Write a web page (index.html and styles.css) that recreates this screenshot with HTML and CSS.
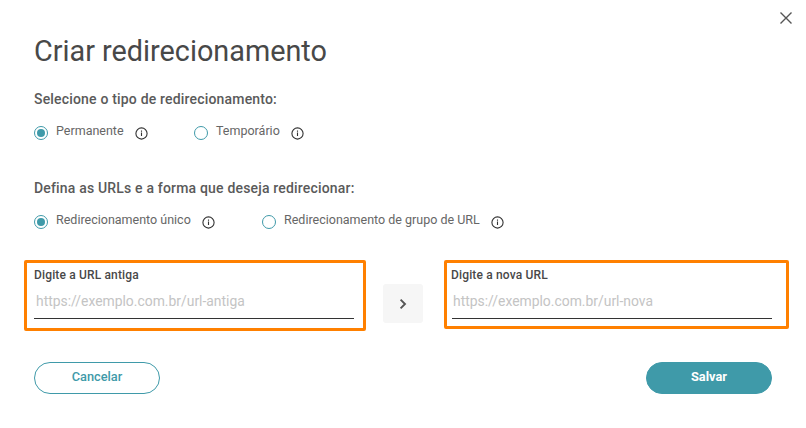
FILE: index.html
```html
<!DOCTYPE html>
<html lang="pt-BR">
<head>
<meta charset="utf-8">
<title>Criar redirecionamento</title>
<link rel="stylesheet" href="styles.css">
</head>
<body>
<main class="modal">
  <button class="close" aria-label="Fechar">
    <svg width="14" height="14" viewBox="0 0 14 14"><path d="M1.5 1.5l11 11M12.5 1.5l-11 11" fill="none" stroke="#555" stroke-width="1.4"/></svg>
  </button>
  <h1 class="title">Criar redirecionamento</h1>

  <h2 class="section section-first">Selecione o tipo de redirecionamento:</h2>
  <div class="options options-type">
    <label class="option"><span class="radio radio-on"></span><span class="option-text">Permanente</span>
      <svg class="info" viewBox="0 0 13 13"><circle cx="6.5" cy="6.5" r="5.6"/><path d="M6.5 5.6v3.4M6.5 3.5v1.2"/></svg></label>
    <label class="option"><span class="radio"></span><span class="option-text">Temporário</span>
      <svg class="info" viewBox="0 0 13 13"><circle cx="6.5" cy="6.5" r="5.6"/><path d="M6.5 5.6v3.4M6.5 3.5v1.2"/></svg></label>
  </div>

  <h2 class="section section-second">Defina as URLs e a forma que deseja redirecionar:</h2>
  <div class="options options-mode">
    <label class="option"><span class="radio radio-on"></span><span class="option-text">Redirecionamento único</span>
      <svg class="info" viewBox="0 0 13 13"><circle cx="6.5" cy="6.5" r="5.6"/><path d="M6.5 5.6v3.4M6.5 3.5v1.2"/></svg></label>
    <label class="option"><span class="radio"></span><span class="option-text">Redirecionamento de grupo de URL</span>
      <svg class="info" viewBox="0 0 13 13"><circle cx="6.5" cy="6.5" r="5.6"/><path d="M6.5 5.6v3.4M6.5 3.5v1.2"/></svg></label>
  </div>

  <div class="urls">
    <div class="field field-old">
      <div class="field-label">Digite a URL antiga</div>
      <div class="field-input">https://exemplo.com.br/url-antiga</div>
    </div>
    <div class="arrow">
      <svg width="10" height="12" viewBox="0 0 10 12"><path d="M2.6 1.6L7 6l-4.4 4.4" fill="none" stroke="#555" stroke-width="1.9"/></svg>
    </div>
    <div class="field field-new">
      <div class="field-label">Digite a nova URL</div>
      <div class="field-input">https://exemplo.com.br/url-nova</div>
    </div>
  </div>

  <div class="actions">
    <button class="btn btn-cancel">Cancelar</button>
    <button class="btn btn-save">Salvar</button>
  </div>
</main>
</body>
</html>
```
FILE: styles.css
```css
* { box-sizing: border-box; }
html, body { margin: 0; padding: 0; background: #fff; }
body { width: 806px; height: 428px; overflow: hidden; font-family: Roboto, "Liberation Sans", sans-serif; color: #555; }
.modal { position: relative; width: 806px; height: 428px; padding: 32px 34px 0 34px; }
.close { position: absolute; top: 11px; right: 13px; width: 14px; height: 14px; padding: 0; border: 0; background: none; display: block; }
.close svg { display: block; }
.title { margin: 0; font-size: 28.8px; line-height: 38px; font-weight: 400; color: #484848; }
.section { margin: 0; font-size: 14px; line-height: 18px; font-weight: 500; color: #5a5a5a; letter-spacing: 0.18px; }
.section-first { margin-top: 20px; }
.section-second { margin-top: 37px; }
.options { display: flex; align-items: center; height: 20px; margin-top: 14px; }
.option { display: flex; align-items: center; font-size: 12.5px; line-height: 20px; color: #666; }
.options-type .option:first-child { width: 160px; }
.options-mode .option:first-child { width: 228px; }
.radio { width: 14px; height: 14px; border: 1px solid #3f9aa9; border-radius: 50%; margin-right: 8px; flex: none; display: flex; align-items: center; justify-content: center; position: relative; top: 1px; }
.radio-on::before { content: ""; width: 8px; height: 8px; border-radius: 50%; background: #3f9aa9; }
.option-text { position: relative; top: -1px; }
.info { width: 13px; height: 13px; margin-left: 11px; flex: none; fill: none; stroke: #333; stroke-width: 1.1; position: relative; top: 1px; }
.urls { display: flex; align-items: flex-start; margin: 29px 0 0 -10px; }
.field { border: 3px solid #ff8000; border-radius: 2px; flex: none; padding: 4px 9px 0 7px; }
.field-old { width: 342px; height: 71px; }
.field-new { width: 345px; height: 69px; margin-left: 21px; padding: 4px 14px 0 5px; }
.field-new .field-label { margin-left: -1px; }
.field-new .field-input { padding-left: 1px; }
.field-label { font-size: 12px; line-height: 16px; font-weight: 500; color: #484848; letter-spacing: 0.15px; }
.field-input { margin-top: 6px; height: 30px; border-bottom: 1px solid #333; padding-left: 2px; font-size: 13.9px; line-height: 24px; color: #c4c4c4; }
.arrow { width: 40px; height: 39px; margin: 24px 0 0 17px; flex: none; background: #f6f6f6; border-radius: 3px; display: flex; align-items: center; justify-content: center; }
.actions { display: flex; justify-content: space-between; margin-top: 31px; }
.btn { width: 126px; height: 32px; border-radius: 16px; padding: 0 0 2px; font: 500 12.8px/16px Roboto, "Liberation Sans", sans-serif; border: 1px solid #3f9aa9; }
.btn-cancel { background: #fff; color: #3f9aa9; }
.btn-save { background: #3f9aa9; color: #fff; font-weight: 700; }
```
